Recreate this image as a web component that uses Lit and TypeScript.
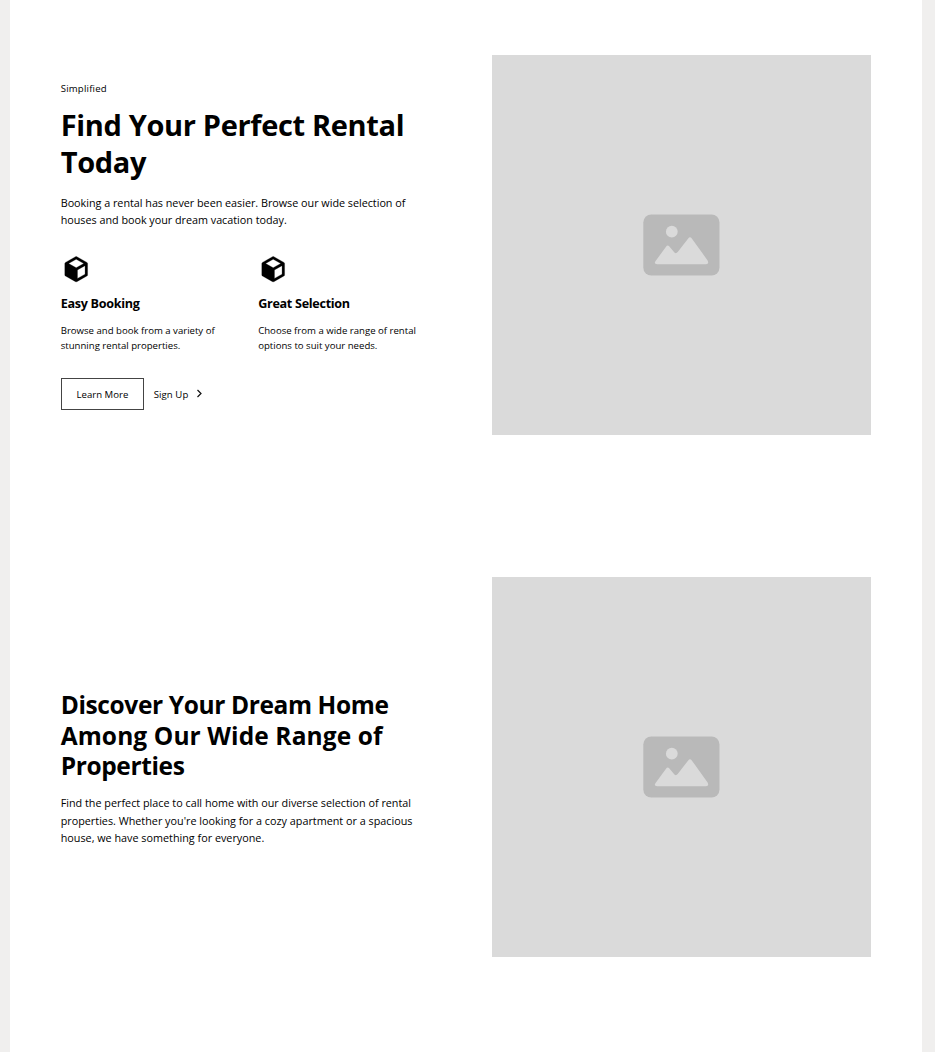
import { LitElement, html, css } from "lit";
import { customElement, property } from "lit/decorators.js";

@customElement("image-placeholder")
class ImagePlaceholder extends LitElement {
  static styles = css`
    :host { display: grid; place-items: center; width: 379.4px; height: 380px; background: #dadada; }
    .glyph { display: block; width: 77px; height: 62px; }
  `;
  render() {
    return html`<svg class="glyph" viewBox="0 0 77 62">
      <rect x="0.3" y="0.5" width="76.2" height="61" rx="8" fill="#b9b9b9" />
      <circle cx="28.8" cy="17.7" r="5.9" fill="#dadada" />
      <path d="M12.4 47.2 23.2 32.6Q24.7 30.5 26.4 32.6L31.2 38.2Q33 40.2 34.7 38L45.2 24.4Q47 22 48.8 24.4L64.6 46.4Q66.4 50.2 63 50.2H14.2Q10.6 50.2 12.4 47.2Z" fill="#dadada" />
    </svg>`;
  }
}

@customElement("feature-item")
class FeatureItem extends LitElement {
  @property() heading = "";
  @property({ attribute: false }) lines: string[] = [];
  static styles = css`
    :host { display: block; }
    .cube { display: block; width: 30.4px; height: 30.4px; }
    .heading { margin: 10.6px 0 10px; font-size: 12.6px; line-height: 18px; font-weight: 700; letter-spacing: -0.3px; }
    .copy { margin: 0; font-size: 9.6px; line-height: 15.2px; white-space: nowrap; }
  `;
  render() {
    return html`
      <svg class="cube" viewBox="0 0 24 24">
        <path fill-rule="evenodd" stroke="#000" stroke-width="0.2" stroke-linejoin="round" d="M21 16.5c0 .38-.21.71-.53.88l-7.9 4.44c-.16.12-.36.18-.57.18s-.41-.06-.57-.18l-7.9-4.44A.99.99 0 0 1 3 16.5v-9c0-.38.21-.71.53-.88l7.9-4.44c.16-.12.36-.18.57-.18s.41.06.57.18l7.9 4.44c.32.17.53.5.53.88v9ZM12 4.15 6.04 7.5 12 10.85l5.96-3.35L12 4.15Zm7 11.76V9.21l-6 3.38v6.7l6-3.38Z" />
      </svg>
      <h3 class="heading">${this.heading}</h3>
      <p class="copy">${this.lines[0]}<br />${this.lines[1]}</p>
    `;
  }
}

@customElement("app-root")
class AppRoot extends LitElement {
  static styles = css`
    :host { display: block; height: 1052px; overflow: hidden; background: #f0efee; font-family: "Open Sans", "Noto Sans", sans-serif; color: #000; }
    .page { box-sizing: border-box; width: 912px; height: 1052px; margin-left: 10px; padding: 55px 50.7px 0; background: #fff; display: flex; flex-direction: column; gap: 142px; }
    .section { display: grid; grid-template-columns: 380px 379.4px; gap: 50.9px; height: 380px; align-items: start; }
    .intro { padding-top: 25.5px; }
    .details { padding-top: 113.2px; }
    .tagline { margin: 0; font-size: 9.6px; line-height: 15px; font-weight: 500; letter-spacing: 0.2px; }
    h1, h2, p { white-space: nowrap; }
    .title { margin: 10.4px 0 13.8px; font-size: 29px; line-height: 37px; font-weight: 700; letter-spacing: -0.34px; }
    .subtitle { margin: 0 0 12.8px; font-size: 24.5px; line-height: 30.4px; font-weight: 700; letter-spacing: -0.38px; }
    .wide { letter-spacing: 0.11px; }
    .lead { margin: 0; font-size: 10.8px; line-height: 17.3px; }
    .intro .lead { letter-spacing: -0.02px; }
    .features { display: grid; grid-template-columns: 1fr 1fr; gap: 15px; margin-top: 25.3px; }
    .actions { display: flex; align-items: center; gap: 9.5px; margin-top: 25px; font-size: 9.6px; }
    .button { box-sizing: border-box; width: 83.5px; height: 32px; border: 1px solid #444; background: #fff; padding: 2px 0 0; font: inherit; color: inherit; }
    .link { display: flex; align-items: center; gap: 7.5px; padding-top: 2px; letter-spacing: 0.08px; }
    .chevron { width: 7px; height: 9px; margin-bottom: 2px; fill: none; stroke: #111; stroke-width: 1.2; }
  `;
  render() {
    return html`<main class="page">
      <section class="section">
        <div class="intro">
          <p class="tagline">Simplified</p>
          <h1 class="title">Find Your Perfect Rental<br />Today</h1>
          <p class="lead">Booking a rental has never been easier. Browse our wide selection of<br />houses and book your dream vacation today.</p>
          <div class="features">
            <feature-item heading="Easy Booking" .lines=${["Browse and book from a variety of", "stunning rental properties."]}></feature-item>
            <feature-item heading="Great Selection" .lines=${["Choose from a wide range of rental", "options to suit your needs."]}></feature-item>
          </div>
          <div class="actions">
            <button class="button">Learn More</button>
            <span class="link">Sign Up <svg class="chevron" viewBox="0 0 7 9"><path d="M1.5 1 5 4.5 1.5 8" /></svg></span>
          </div>
        </div>
        <image-placeholder></image-placeholder>
      </section>
      <section class="section">
        <div class="details">
          <h2 class="subtitle">Discover Your Dream Home<br /><span class="wide">Among Our Wide Range of</span><br />Properties</h2>
          <p class="lead">Find the perfect place to call home with our diverse selection of rental<br />properties. Whether you're looking for a cozy apartment or a spacious<br />house, we have something for everyone.</p>
        </div>
        <image-placeholder></image-placeholder>
      </section>
    </main>`;
  }
}
